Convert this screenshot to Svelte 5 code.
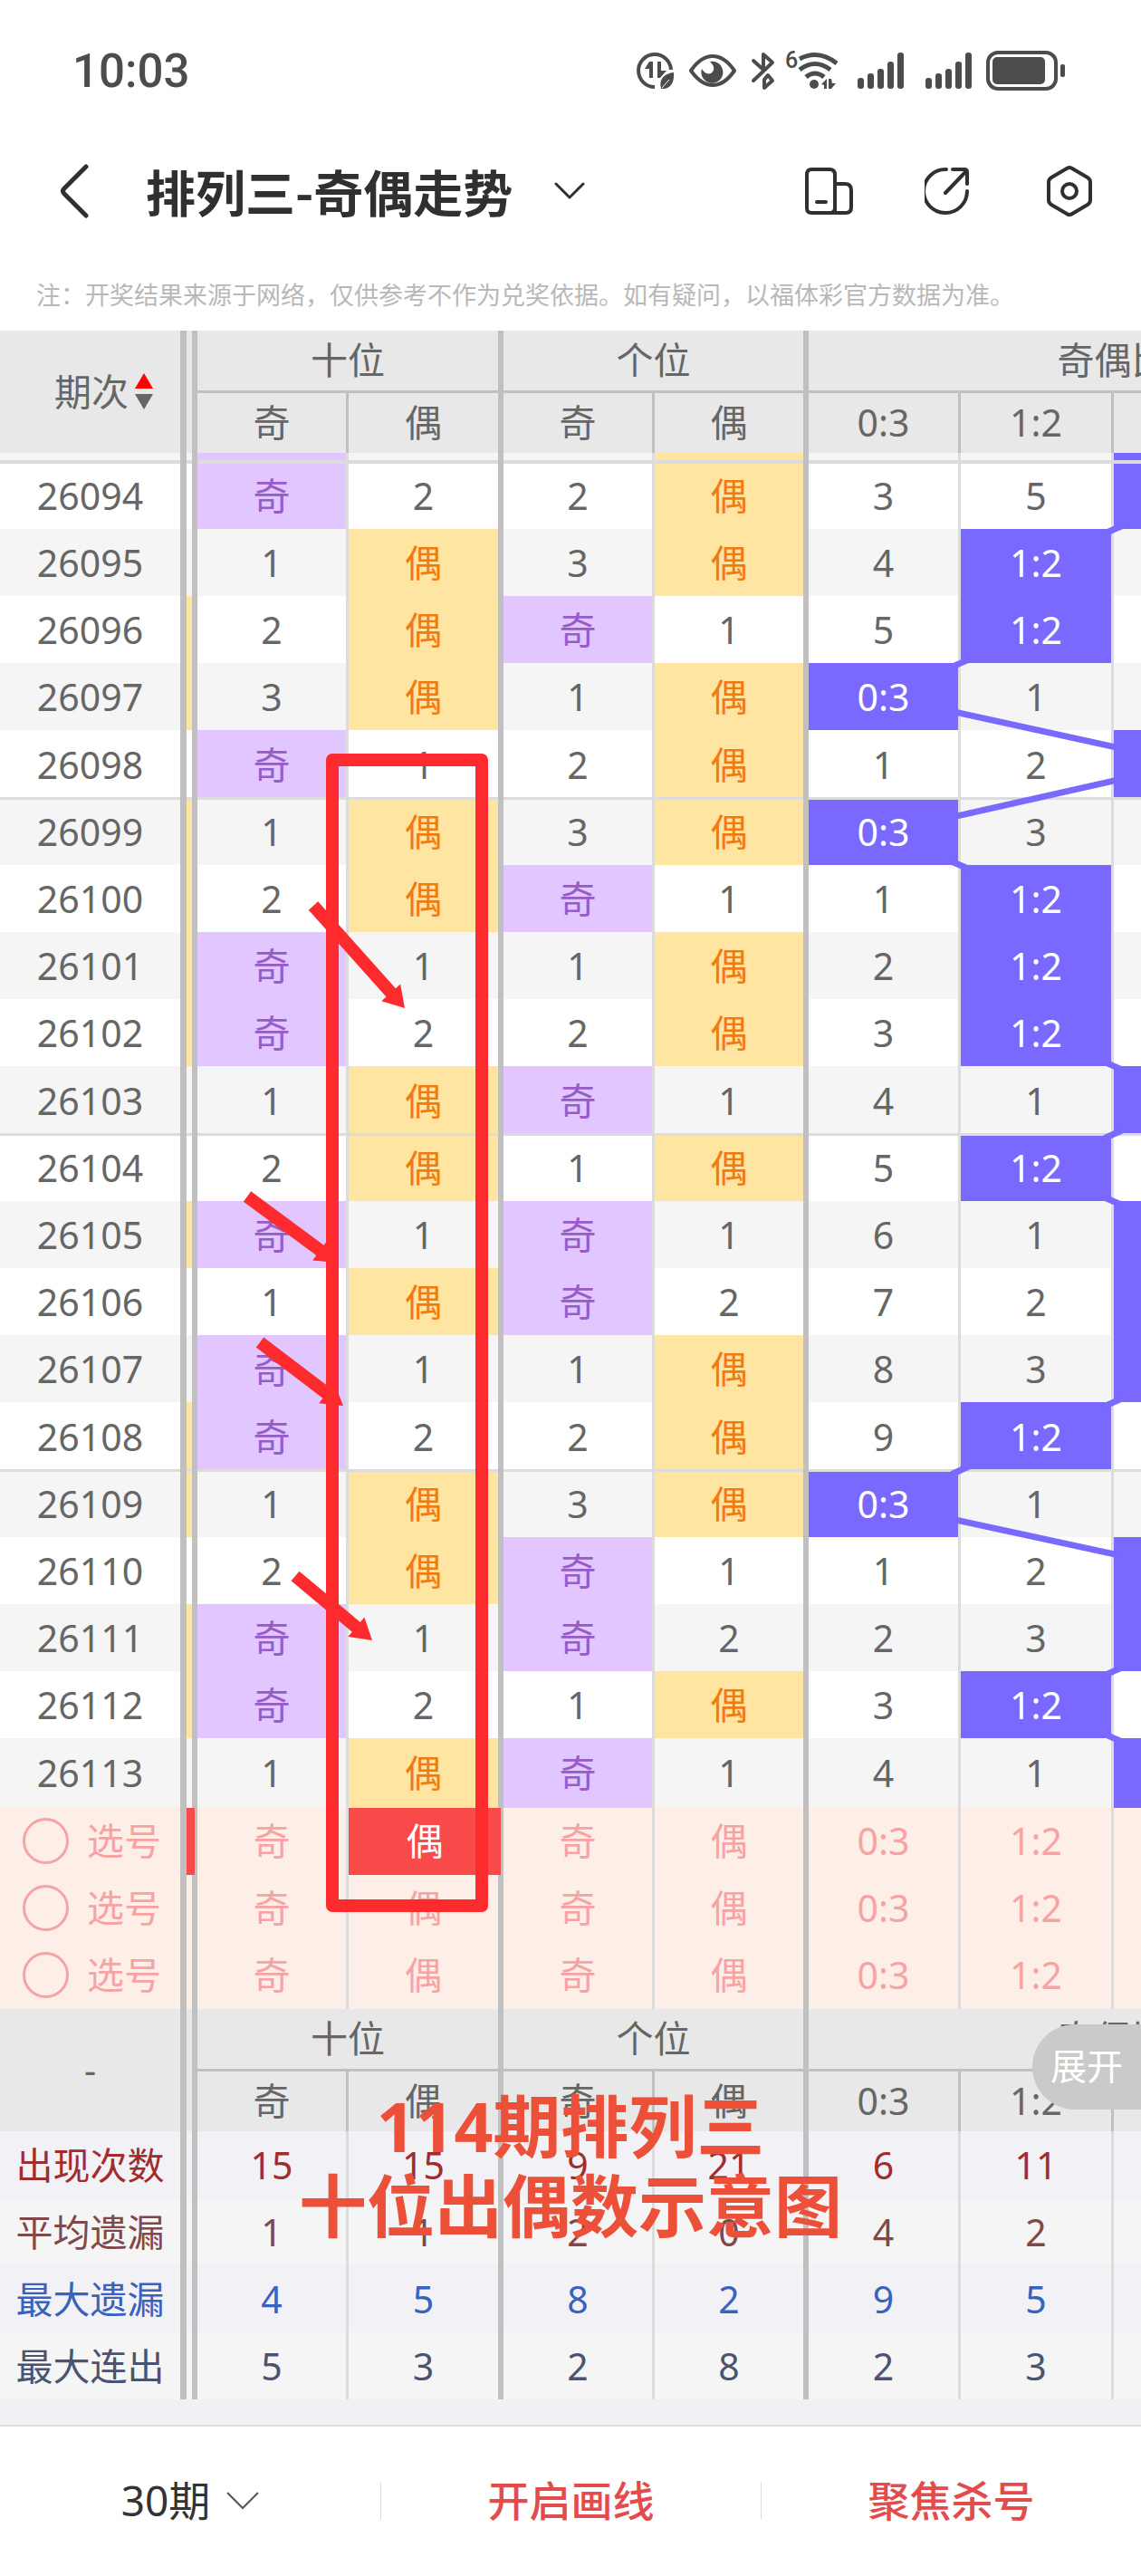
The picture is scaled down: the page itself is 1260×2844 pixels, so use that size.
<script lang="ts">
  type Row = { issue: string; prev: boolean; cells: string[]; ratio21?: boolean }

  const ODD = '奇'
  const EVEN = '偶'

  // prev: the even cell of the column scrolled under the label was hit
  const rows: Row[] = [
    { issue: '26094', prev: false, cells: [ODD, '2', '2', EVEN, '3', '5'], ratio21: true },
    { issue: '26095', prev: false, cells: ['1', EVEN, '3', EVEN, '4', '1:2'] },
    { issue: '26096', prev: true, cells: ['2', EVEN, ODD, '1', '5', '1:2'] },
    { issue: '26097', prev: true, cells: ['3', EVEN, '1', EVEN, '0:3', '1'] },
    { issue: '26098', prev: false, cells: [ODD, '1', '2', EVEN, '1', '2'], ratio21: true },
    { issue: '26099', prev: true, cells: ['1', EVEN, '3', EVEN, '0:3', '3'] },
    { issue: '26100', prev: true, cells: ['2', EVEN, ODD, '1', '1', '1:2'] },
    { issue: '26101', prev: true, cells: [ODD, '1', '1', EVEN, '2', '1:2'] },
    { issue: '26102', prev: true, cells: [ODD, '2', '2', EVEN, '3', '1:2'] },
    { issue: '26103', prev: false, cells: ['1', EVEN, ODD, '1', '4', '1'], ratio21: true },
    { issue: '26104', prev: false, cells: ['2', EVEN, '1', EVEN, '5', '1:2'] },
    { issue: '26105', prev: true, cells: [ODD, '1', ODD, '1', '6', '1'], ratio21: true },
    { issue: '26106', prev: false, cells: ['1', EVEN, ODD, '2', '7', '2'], ratio21: true },
    { issue: '26107', prev: false, cells: [ODD, '1', '1', EVEN, '8', '3'], ratio21: true },
    { issue: '26108', prev: true, cells: [ODD, '2', '2', EVEN, '9', '1:2'] },
    { issue: '26109', prev: true, cells: ['1', EVEN, '3', EVEN, '0:3', '1'] },
    { issue: '26110', prev: false, cells: ['2', EVEN, ODD, '1', '1', '2'], ratio21: true },
    { issue: '26111', prev: true, cells: [ODD, '1', ODD, '2', '2', '3'], ratio21: true },
    { issue: '26112', prev: true, cells: [ODD, '2', '1', EVEN, '3', '1:2'] },
    { issue: '26113', prev: false, cells: ['1', EVEN, ODD, '1', '4', '1'], ratio21: true }
  ]

  const stats = [
    { label: '出现次数', kind: 'count', values: [15, 15, 9, 21, 6, 11] },
    { label: '平均遗漏', kind: 'average', values: [1, 1, 2, 0, 4, 2] },
    { label: '最大遗漏', kind: 'longest', values: [4, 5, 8, 2, 9, 5] },
    { label: '最大连出', kind: 'streak', values: [5, 3, 2, 8, 2, 3] }
  ]

  const heads = [ODD, EVEN, ODD, EVEN, '0:3', '1:2']
  const colWidths = [206, 12, 167, 171, 167, 170, 168, 169, 169, 169]

  let picked = $state([false, false, false])
  let chosen = $state([1, -1, -1])

  function tone(value: string) {
    if (value === ODD) return 'odd'
    if (value === EVEN) return 'even'
    if (value.includes(':')) return 'ratio'
    return ''
  }

  // trend line through the ratio columns
  const RATIO_LEFT = 893
  const RATIO_W = 169
  const BODY_TOP = 147

  function hitCol(row: Row) {
    if (row.cells[4] === '0:3') return 0
    if (row.cells[5] === '1:2') return 1
    return 2
  }

  function rowCenter(i: number) {
    const k = i % 5
    return BODY_TOP + Math.floor(i / 5) * 371 + (k === 0 ? 36 : 72 + (k - 1) * 74 + 37)
  }

  const links = rows.slice(1).flatMap((row, n) => {
    const a = hitCol(rows[n])
    const b = hitCol(row)
    if (a === b) return []
    const dir = b > a ? 1 : -1
    const ax = RATIO_LEFT + RATIO_W * (a + 0.5) - 1
    const bx = RATIO_LEFT + RATIO_W * (b + 0.5) - 1
    const ay = rowCenter(n)
    const by = rowCenter(n + 1)
    const at = (x: number) => ay + ((x - ax) / (bx - ax)) * (by - ay)
    const inset = Math.abs(b - a) === 1 ? 10 : 4
    const x1 = ax + dir * (RATIO_W / 2 - inset)
    const x2 = bx - dir * (RATIO_W / 2 - inset)
    return [{ x1, y1: at(x1), x2, y2: at(x2) }]
  })

  const arrows = [
    [346, 635, 447, 748],
    [273, 956, 372, 1029],
    [287, 1117, 379, 1187],
    [326, 1375, 411, 1446]
  ]

  function arrowPoints([x1, y1, x2, y2]: number[]) {
    const len = Math.hypot(x2 - x1, y2 - y1)
    const ux = (x2 - x1) / len
    const uy = (y2 - y1) / len
    const p = (along: number, side: number) => `${x1 + ux * along - uy * side},${y1 + uy * along + ux * side}`
    const neck = len - 23
    return [p(0, 7), p(neck, 7), p(neck, 14), p(len, 0), p(neck, -14), p(neck, -7), p(0, -7)].join(' ')
  }
</script>

<div class="page">
  <div class="status">
    <span class="clock">10:03</span>
    <svg class="status-icons" viewBox="700 50 480 56" width="480" height="56" aria-hidden="true">
      <g fill="none" stroke="#4c4c4c" stroke-width="4" stroke-linecap="round" stroke-linejoin="round">
        <path d="M741 77A18 18 0 1 0 723 96" stroke-linecap="butt" />
        <path d="M763 78Q774 62 787 62T811 78Q800 94 787 94T763 78Z" />
        <path d="M832 67L843 77V60L853 69L832 89M848 83L853 89L844 97V88Z" />
        <path d="M883 65Q904 54 924 70M883 77Q900 64 917 77M890 85Q900 77 910 85" stroke-width="5" stroke-linecap="butt" />
      </g>
      <g fill="#4c4c4c">
        <path d="M717 68h4v18h-4V76h-5zM726 68h4v10h6l-7 8h-3z" />
        <path d="M730 98C727 87 734 81 744 80C745 93 739 99 730 98Z" />
        <path d="M731 97l8-9" stroke="#fff" stroke-width="1" />
        <path d="M784 68A12 12 0 1 1 775 76Q779 83 785 81Q792 76 784 68Z" />
        <circle cx="899" cy="93" r="5" />
        <path d="M907 93l6-6v11h-3v-4zM915 87h3l1 5h4l-5 6h-3z" />
        <text x="867" y="75" class="wifi-gen">6</text>
        {#each [947, 1022] as x}
          <rect {x} y="86" width="7" height="12" rx="3" />
          <rect x={x + 11} y="81" width="7" height="17" rx="3" />
          <rect x={x + 22} y="76" width="7" height="22" rx="3" />
          <rect x={x + 33} y="68" width="7" height="30" rx="3" />
          <rect x={x + 44} y="58" width="7" height="40" rx="3" />
        {/each}
        <rect x="1091" y="58" width="75" height="40" rx="11" fill="none" stroke="#4c4c4c" stroke-width="4" />
        <rect x="1096" y="63" width="58" height="30" rx="5" />
        <rect x="1171" y="71" width="5" height="14" rx="2" />
      </g>
    </svg>
  </div>

  <header class="nav">
    <button class="icon-btn" aria-label="返回">
      <svg viewBox="0 0 34 60" width="34" height="60"><path d="M30 3L6 27Q3 30 6 33L30 57" stroke-width="5" /></svg>
    </button>
    <h1>排列三-奇偶走势</h1>
    <button class="icon-btn" aria-label="切换走势">
      <svg viewBox="0 0 34 20" width="34" height="20"><path d="M2 2L17 17L32 2" stroke-width="3" /></svg>
    </button>
    <div class="tools">
      <button class="icon-btn" aria-label="横竖屏">
        <svg viewBox="0 0 54 56" width="54" height="56">
          <path d="M8 4H28Q34 4 34 10V52H8Q3 52 3 47V10Q3 4 8 4ZM34 20H45Q52 20 52 27V46Q52 52 46 52H30M34 46Q34 52 29 52M14 40H24" stroke-width="4" />
        </svg>
      </button>
      <button class="icon-btn" aria-label="分享">
        <svg viewBox="3 0 54 56" width="54" height="56">
          <path d="M27 4A24 24 0 1 0 50 28M26 30L49 6M34 4H47Q50 4 50 7V20" stroke-width="4" />
        </svg>
      </button>
      <button class="icon-btn" aria-label="设置">
        <svg viewBox="0 0 54 56" width="54" height="56">
          <path d="M24 3Q27 1 30 3L47 13Q50 15 50 18V38Q50 41 47 43L30 53Q27 55 24 53L7 43Q4 41 4 38V18Q4 15 7 13Z" stroke-width="4" />
          <circle cx="27" cy="28" r="8" stroke-width="4" />
        </svg>
      </button>
    </div>
  </header>

  <p class="note">注：开奖结果来源于网络，仅供参考不作为兑奖依据。如有疑问，以福体彩官方数据为准。</p>

  <main class="chart">
    <table>
      <colgroup>
        {#each colWidths as w}
          <col style="width: {w}px" />
        {/each}
      </colgroup>
      <thead>
        <tr>
          <th class="label" rowspan="2">
            <button class="sort">
              期次
              <svg viewBox="0 0 20 40" width="20" height="40" aria-hidden="true">
                <path d="M10 0L20 17H0Z" fill="#f00" />
                <path d="M10 40L20 23H0Z" fill="#666" />
              </svg>
            </button>
          </th>
          <th class="thick" rowspan="2"></th>
          <th class="thick under" colspan="2">十位</th>
          <th class="thick under" colspan="2">个位</th>
          <th class="under" colspan="4">奇偶比</th>
        </tr>
        <tr>
          {#each heads as head, c}
            <th class:thick={c === 1 || c === 3}>{head}</th>
          {/each}
          <th></th>
          <th></th>
        </tr>
      </thead>
      <tbody>
        <tr class="peek">
          <td class="label"></td>
          <td class="thick"></td>
          <td class="odd"></td>
          <td class="thick"></td>
          <td></td>
          <td class="even thick"></td>
          <td></td>
          <td></td>
          <td class="ratio"></td>
          <td></td>
        </tr>
        {#each rows as row, i}
          <tr class:gray={i % 2 === 1} class:first={i % 5 === 0} class:last={i % 5 === 4} class:ruled={i % 5 === 4 && i < rows.length - 1}>
            <td class="label">{row.issue}</td>
            <td class="thick" class:even={row.prev}></td>
            {#each row.cells as value, c}
              <td class={tone(value)} class:thick={c === 1 || c === 3}>{value}</td>
            {/each}
            <td class:ratio={row.ratio21}></td>
            <td></td>
          </tr>
        {/each}
      </tbody>
      <tbody class="picks">
        {#each picked as _, i}
          <tr>
            <td class="label">
              <label><input type="checkbox" bind:checked={picked[i]} />选号</label>
            </td>
            <td class="thick" class:chosen={chosen[i] >= 0}></td>
            {#each heads as head, c}
              <td class:thick={c === 1 || c === 3} class:chosen={chosen[i] === c}>
                <button onclick={() => (chosen[i] = chosen[i] === c ? -1 : c)}>{head}</button>
              </td>
            {/each}
            <td></td>
            <td></td>
          </tr>
        {/each}
      </tbody>
      <tbody class="stats">
        <tr>
          <th class="label" rowspan="2">-</th>
          <th class="thick" rowspan="2"></th>
          <th class="thick under" colspan="2">十位</th>
          <th class="thick under" colspan="2">个位</th>
          <th class="under" colspan="4">奇偶比</th>
        </tr>
        <tr>
          {#each heads as head, c}
            <th class:thick={c === 1 || c === 3}>{head}</th>
          {/each}
          <th></th>
          <th></th>
        </tr>
        {#each stats as stat}
          <tr class={stat.kind}>
            <td class="label">{stat.label}</td>
            <td class="thick"></td>
            {#each stat.values as value, c}
              <td class:thick={c === 1 || c === 3}>{value}</td>
            {/each}
            <td></td>
            <td></td>
          </tr>
        {/each}
      </tbody>
    </table>

    <svg class="marks" aria-hidden="true">
      {#each links as l}
        <line x1={l.x1} y1={l.y1} x2={l.x2} y2={l.y2} stroke="#7969ff" stroke-width="7" />
      {/each}
      <rect x="367" y="474" width="165" height="1265" fill="none" stroke="#fd2b2d" stroke-width="14" stroke-linejoin="round" />
      {#each arrows as a}
        <polygon points={arrowPoints(a)} fill="#fd2b2d" />
      {/each}
    </svg>

    <button class="expand">展开</button>
    <p class="memo">114期排列三<br />十位出偶数示意图</p>
  </main>

  <footer>
    <button class="period">
      30期
      <svg viewBox="0 0 36 20" width="36" height="20" aria-hidden="true"><path d="M1 1L18 18L35 1" fill="none" stroke="#555" stroke-width="2" /></svg>
    </button>
    <button>开启画线</button>
    <button>聚焦杀号</button>
  </footer>
</div>

<style>
  :global(body) {
    margin: 0;
    background: #fff;
  }

  .page {
    min-height: 100vh;
    display: flex;
    flex-direction: column;
    overflow: hidden;
    background: #fff;
    font-family: 'Noto Sans', 'Noto Sans CJK SC', sans-serif;
    color: #333;
  }

  button {
    margin: 0;
    padding: 0;
    border: 0;
    background: none;
    font: inherit;
    color: inherit;
    cursor: pointer;
  }

  .status {
    height: 156px;
    padding: 0 80px;
    display: flex;
    align-items: center;
    justify-content: space-between;
  }

  .clock {
    font-family: Roboto, sans-serif;
    font-size: 51px;
    font-weight: 500;
    color: #4c4c4c;
  }

  .status-icons {
    display: block;
  }

  .wifi-gen {
    font: 500 25px Roboto, sans-serif;
  }

  .nav {
    height: 110px;
    padding: 0 52px 0 65px;
    display: flex;
    align-items: center;
  }

  .icon-btn {
    display: flex;
  }

  .icon-btn svg {
    fill: none;
    stroke: #303030;
    stroke-linecap: round;
    stroke-linejoin: round;
  }

  h1 {
    margin: 0 46px 2px 62px;
    font-family: 'Noto Sans CJK SC', sans-serif;
    font-size: 55px;
    line-height: 72px;
    font-weight: 700;
    color: #303030;
  }

  .tools {
    margin-left: auto;
    display: flex;
    gap: 79px;
  }

  .note {
    margin: 0;
    padding: 38px 40px 19px;
    font-family: 'Noto Sans CJK SC', sans-serif;
    font-size: 27px;
    line-height: 42px;
    color: #b8b8b8;
    white-space: nowrap;
  }

  .chart {
    position: relative;
    overflow: hidden;
  }

  table {
    width: 1568px;
    table-layout: fixed;
    border-collapse: separate;
    border-spacing: 0;
    font-size: 41px;
    line-height: 54px;
    color: #666;
  }

  th,
  td {
    box-sizing: border-box;
    height: 74px;
    padding: 0;
    border-right: 3px solid #dcdcdc;
    text-align: center;
    font-weight: 400;
  }

  th {
    height: 66px;
    padding-bottom: 2px;
    background: #e8e8e8;
    border-right-color: #c0c0c0;
  }

  .under {
    height: 69px;
    border-bottom: 3px solid #c0c0c0;
  }

  .thick {
    border-right: 6px solid #c0c0c0;
  }

  .label {
    border-right: 7px solid #c0c0c0;
  }

  .sort {
    padding-left: 30px;
    display: inline-flex;
    align-items: center;
    gap: 7px;
  }

  .peek td {
    height: 12px;
    background-color: #f5f5f5;
    box-shadow: inset 0 -4px #dcdcdc;
  }

  .gray td {
    background: #f5f5f5;
  }

  .first td {
    height: 72px;
    padding-bottom: 2px;
  }

  .last td {
    height: 77px;
    padding-bottom: 2px;
  }

  .ruled td {
    box-shadow: inset 0 -3px #dcdcdc;
  }

  tr td.odd {
    background-color: #e2c6ff;
    color: #985cc9;
  }

  tr td.even {
    background-color: #ffe5a1;
    color: #f27a12;
  }

  tr td.ratio {
    background-color: #7969ff;
    color: #fff;
  }

  .picks td {
    padding-bottom: 2px;
    background: #feeee8;
    color: #f6a3a3;
  }

  .picks td button {
    width: 100%;
    height: 54px;
    display: block;
  }

  .picks tr td.chosen {
    background: #f94a4a;
    color: #fff;
  }

  .picks .thick.chosen {
    border-right-width: 3px;
  }

  .picks label {
    display: flex;
    align-items: center;
    gap: 20px;
    padding-left: 25px;
  }

  .picks input {
    appearance: none;
    box-sizing: border-box;
    width: 51px;
    height: 51px;
    margin: 0;
    border: 3px solid #f6a3a3;
    border-radius: 50%;
  }

  .picks input:checked {
    background: #f94a4a;
  }

  .count td {
    background: #f1f1f6;
    color: #a12c2c;
  }

  .average td {
    background: #f5f5f5;
    color: #804848;
  }

  .longest td {
    background: #f1f1f6;
    color: #3a62bd;
  }

  .streak td {
    background: #f5f5f5;
    color: #4a5470;
  }

  .marks {
    position: absolute;
    inset: 0;
    width: 100%;
    height: 100%;
    pointer-events: none;
  }

  .expand {
    position: absolute;
    top: 1870px;
    right: 0;
    height: 94px;
    padding: 0 20px 6px;
    border-radius: 47px 0 0 47px;
    background: #cacaca;
    font-size: 40px;
    color: #fff;
  }

  .memo {
    position: absolute;
    top: 1938px;
    left: 0;
    right: 0;
    margin: 0;
    font-size: 75px;
    line-height: 88px;
    font-weight: 700;
    text-align: center;
    color: #ed5039;
    pointer-events: none;
  }

  footer {
    flex: 1;
    min-height: 165px;
    display: grid;
    grid-template-columns: repeat(3, 1fr);
    align-items: center;
    border-top: 28px solid #f0f0f5;
    box-shadow: inset 0 2px #dcdcdc;
  }

  footer button {
    height: 41px;
    font-size: 46px;
    line-height: 41px;
    font-weight: 500;
    color: #e34b4d;
  }

  footer button + button {
    border-left: 1px solid #dcdcdc;
  }

  footer .period {
    display: flex;
    align-items: center;
    justify-content: center;
    gap: 18px;
    font-weight: 400;
    color: #333;
  }
</style>
